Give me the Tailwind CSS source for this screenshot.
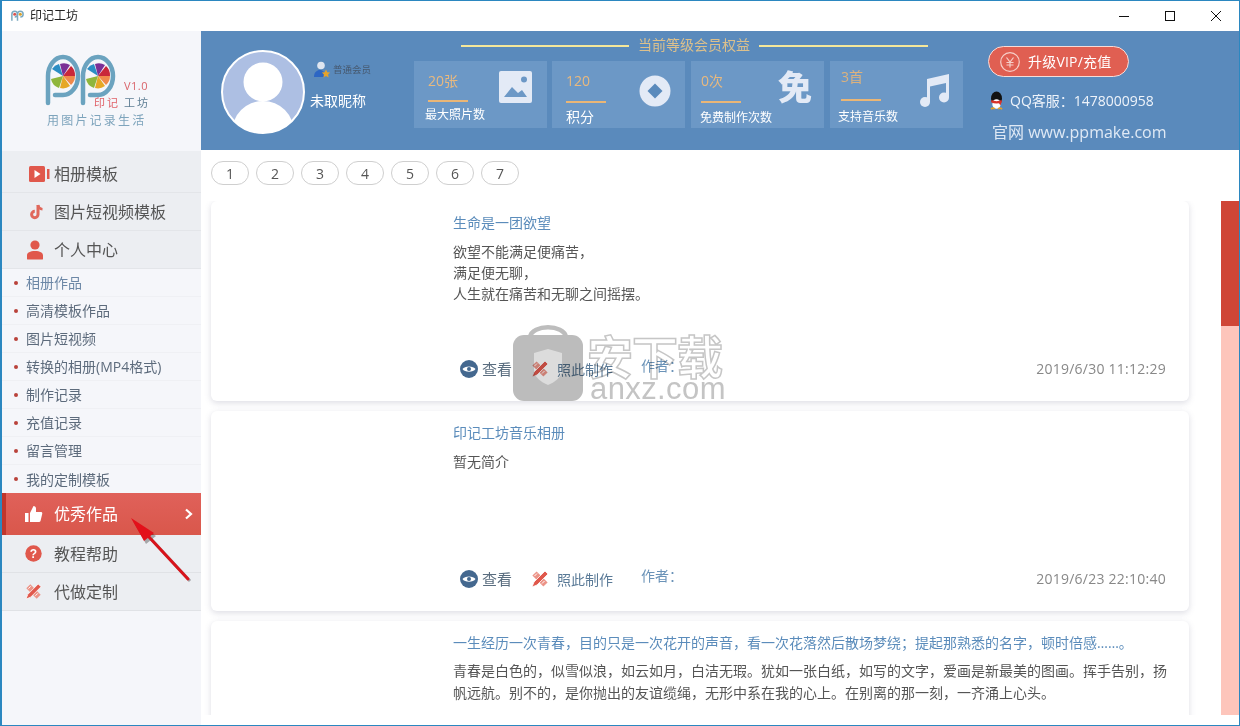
<!DOCTYPE html>
<html lang="zh-CN">

<head>
    <meta charset="UTF-8">
    <title>印记工坊</title>
    <script src="https://cdn.jsdelivr.net/npm/@tailwindcss/browser@4"></script>
</head>

<body class="bg-white">
    <div class="relative w-[1240px] h-[726px] flex flex-col overflow-hidden border border-[#2b87c0] border-l-2 bg-white font-['Open_Sans','Noto_Sans_CJK_SC',sans-serif] text-[14px]">

        <!-- title bar -->
        <div class="h-[30px] shrink-0 flex items-center bg-white">
            <svg class="ml-[8px] w-[15px] h-[16px]" viewBox="0 0 16 16" fill="none">
                <path d="M2 13V6a3 3 0 1 1 3 3" stroke="#7aa9c0" stroke-width="1.6" />
                <path d="M8 13V6a3 3 0 1 1 3 3" stroke="#7aa9c0" stroke-width="1.6" />
                <circle cx="5" cy="6" r="1.6" fill="#d9534f" />
                <circle cx="11" cy="6" r="1.6" fill="#d9a02b" />
            </svg>
            <span class="ml-[5px] text-[#222] text-[12px]">印记工坊</span>
            <div class="ml-auto flex items-center">
                <svg class="w-[46px] h-[30px]" viewBox="0 0 46 30"><path d="M18 15.500h10" stroke="#111" stroke-width="1" /></svg>
                <svg class="w-[46px] h-[30px]" viewBox="0 0 46 30"><rect x="18.500" y="10.500" width="9" height="9" fill="none" stroke="#111" stroke-width="1" /></svg>
                <svg class="w-[46px] h-[30px]" viewBox="0 0 46 30"><path d="M18 10l10 10M28 10L18 20" stroke="#111" stroke-width="1" /></svg>
            </div>
        </div>

        <div class="flex flex-1 min-h-0">
            <!-- sidebar -->
            <aside class="w-[199px] shrink-0 bg-[#f5f6fa] flex flex-col">
                <div class="h-[120px] shrink-0 relative">
                    <svg class="absolute left-[42px] top-[23px] w-[78px] h-[56px]" viewBox="0 0 78 56" fill="none">
                        <path d="M4 49V22a15 19 0 1 1 15 19h-8" stroke="#6ba3bf" stroke-width="4.500" stroke-linecap="round" />
                        <path d="M39 49V22a15 19 0 1 1 15 19h-8" stroke="#6ba3bf" stroke-width="4.500" stroke-linecap="round" />
                        <g transform="translate(-5 0)">
                            <path d="M24 22L13 15a12 12 0 0 1 7-5z" fill="#2b8ec4" />
                            <path d="M24 22l-3-12a12 12 0 0 1 10 1z" fill="#7b2f96" />
                            <path d="M24 22l8-10a12 12 0 0 1 4 10z" fill="#c9283a" />
                            <path d="M24 22h12a12 12 0 0 1-4 9z" fill="#f08a4b" />
                            <path d="M24 22l7 10a12 12 0 0 1-10 2z" fill="#e6a826" />
                            <path d="M24 22l-4 12a12 12 0 0 1-8-9z" fill="#8fb63c" />
                        </g>
                        <g transform="translate(-6 0)">
                            <path d="M60 22L49 15a12 12 0 0 1 7-5z" fill="#2b8ec4" />
                            <path d="M60 22l-3-12a12 12 0 0 1 10 1z" fill="#7b2f96" />
                            <path d="M60 22l8-10a12 12 0 0 1 4 10z" fill="#c9283a" />
                            <path d="M60 22h12a12 12 0 0 1-4 9z" fill="#f08a4b" />
                            <path d="M60 22l7 10a12 12 0 0 1-10 2z" fill="#e6a826" />
                            <path d="M60 22l-4 12a12 12 0 0 1-8-9z" fill="#8fb63c" />
                        </g>
                    </svg>
                    <span class="absolute left-[122px] top-[48px] text-[11px] leading-[14px] tracking-[0.5px] text-[#d9646a]">V1.0</span>
                    <span class="absolute left-[92px] top-[65px] text-[11px] leading-[14px] tracking-[2px] text-[#e0636a]">印记<span class="ml-[4px] text-[#5f7f95]">工坊</span></span>
                    <span class="absolute left-[45px] top-[83px] text-[12px] leading-[14px] tracking-[2.2px] text-[#7ea4bc]">用图片记录生活</span>
                </div>

                <a class="h-[42px] pt-[4px] flex items-center bg-[#eceef2] border-b border-[#e3e5e9] text-[16px] text-[#555]">
                    <svg class="ml-[27px] w-[22px] h-[18px]" viewBox="0 0 22 18"><rect y="1" width="16" height="16" rx="1.500" fill="#e0584c" /><path d="M5.500 5l6 4-6 4z" fill="#fff" /><rect x="18" y="4" width="2.500" height="10" fill="#e0584c" /></svg>
                    <span class="ml-[3px]">相册模板</span>
                </a>
                <a class="h-[38px] flex items-center bg-[#eceef2] border-b border-[#e3e5e9] text-[16px] text-[#555]">
                    <svg class="ml-[26px] w-[18px] h-[18px]" viewBox="0 0 18 18" fill="none"><path d="M10 2v9.500a3.200 3.200 0 1 1-3.200-3.200" stroke="#e0685c" stroke-width="3" /><path d="M10 2c.4 2.600 2 4 4.500 4.200" stroke="#e0685c" stroke-width="2.600" /></svg>
                    <span class="ml-[8px]">图片短视频模板</span>
                </a>
                <a class="h-[38px] flex items-center bg-[#eceef2] border-b border-[#e3e5e9] text-[16px] text-[#555]">
                    <svg class="ml-[24px] w-[18px] h-[20px]" viewBox="0 0 18 20"><circle cx="9" cy="5" r="4.600" fill="#e0584c" /><path d="M1 19v-3.500C1 12.500 4 11 9 11s8 1.500 8 4.500V19a1 1 0 0 1-1 .5H2a1 1 0 0 1-1-.5z" fill="#e0584c" /></svg>
                    <span class="ml-[10px]">个人中心</span>
                </a>

                <div class="flex flex-col text-[14px] text-[#5d6b7c]">
                    <a class="h-[28px] flex items-center border-b border-[#eff0f4] text-[#6c87a6]"><i class="ml-[12px] w-[4px] h-[4px] rounded-full bg-[#b9423a]"></i><span class="ml-[8px]">相册作品</span></a>
                    <a class="h-[28px] flex items-center border-b border-[#eff0f4]"><i class="ml-[12px] w-[4px] h-[4px] rounded-full bg-[#b9423a]"></i><span class="ml-[8px]">高清模板作品</span></a>
                    <a class="h-[28px] flex items-center border-b border-[#eff0f4]"><i class="ml-[12px] w-[4px] h-[4px] rounded-full bg-[#b9423a]"></i><span class="ml-[8px]">图片短视频</span></a>
                    <a class="h-[28px] flex items-center border-b border-[#eff0f4]"><i class="ml-[12px] w-[4px] h-[4px] rounded-full bg-[#b9423a]"></i><span class="ml-[8px]">转换的相册(MP4格式)</span></a>
                    <a class="h-[28px] flex items-center border-b border-[#eff0f4]"><i class="ml-[12px] w-[4px] h-[4px] rounded-full bg-[#b9423a]"></i><span class="ml-[8px]">制作记录</span></a>
                    <a class="h-[28px] flex items-center border-b border-[#eff0f4]"><i class="ml-[12px] w-[4px] h-[4px] rounded-full bg-[#b9423a]"></i><span class="ml-[8px]">充值记录</span></a>
                    <a class="h-[28px] flex items-center border-b border-[#eff0f4]"><i class="ml-[12px] w-[4px] h-[4px] rounded-full bg-[#b9423a]"></i><span class="ml-[8px]">留言管理</span></a>
                    <a class="h-[28px] flex items-center"><i class="ml-[12px] w-[4px] h-[4px] rounded-full bg-[#b9423a]"></i><span class="ml-[8px]">我的定制模板</span></a>
                </div>

                <a class="h-[42px] flex items-center bg-gradient-to-b from-[#e0615a] to-[#d9574b] border-l-[4px] border-[#c0362c] text-[16px] text-white">
                    <svg class="ml-[19px] w-[18px] h-[18px]" viewBox="0 0 18 18" fill="#fff"><rect x="0" y="8" width="3.500" height="9" /><path d="M5 8l3.500-7c1.500 0 2.500 1 2.500 2.500V7h5c1 0 1.500 1 1.200 2l-1.700 7c-.2.700-.7 1-1.500 1H5z" /></svg>
                    <span class="ml-[11px]">优秀作品</span>
                    <svg class="ml-auto mr-[8px] w-[9px] h-[12px]" viewBox="0 0 9 12" fill="none"><path d="M2 1.500L7 6l-5 4.500" stroke="#fff" stroke-width="2.200" /></svg>
                </a>
                <a class="h-[38px] flex items-center bg-[#eceef2] border-b border-[#e0e2e6] text-[16px] text-[#555]">
                    <svg class="ml-[23px] w-[17px] h-[17px]" viewBox="0 0 17 17"><circle cx="8.500" cy="8.500" r="8.200" fill="#e0584c" /><text x="8.500" y="12.800" text-anchor="middle" font-size="12" font-weight="700" fill="#fff" font-family="Liberation Sans">?</text></svg>
                    <span class="ml-[12px]">教程帮助</span>
                </a>
                <a class="h-[38px] flex items-center bg-[#eceef2] border-b border-[#e0e2e6] text-[16px] text-[#555]">
                    <svg class="ml-[23px] w-[17px] h-[17px]" viewBox="0 0 18 18" fill="none"><path d="M3.500 3.500l11 11" stroke="#ec9488" stroke-width="6" /><path d="M3.500 6L6 3.500M7 9.500L9.500 7M11 13.500l2.500-2.500" stroke="#fff" stroke-width="1" /><path d="M14 1L17 4 6 15 1 17l2-5z" fill="#e0584c" stroke="#fff" stroke-width="0.800" /></svg>
                    <span class="ml-[12px]">代做定制</span>
                </a>
            </aside>

            <div class="flex-1 min-w-0 flex flex-col">
                <!-- member header -->
                <header class="h-[119px] shrink-0 bg-[#5a8abc] flex">
                    <svg class="ml-[20px] mt-[19px] w-[84px] h-[84px] shrink-0" viewBox="0 0 84 84">
                        <clipPath id="avatarClip"><circle cx="42" cy="42" r="41" /></clipPath>
                        <circle cx="42" cy="42" r="41" fill="#adbfe3" />
                        <g clip-path="url(#avatarClip)" fill="#fff">
                            <circle cx="42" cy="32" r="19.500" />
                            <ellipse cx="42" cy="82" rx="31" ry="31" />
                        </g>
                        <circle cx="42" cy="42" r="41" fill="none" stroke="#fff" stroke-width="2" />
                    </svg>
                    <div class="w-[104px] shrink-0 ml-[5px] pt-[29px]">
                        <div class="flex items-center h-[20px] ml-[3px]">
                            <svg class="w-[18px] h-[18px] shrink-0" viewBox="0 0 18 18"><circle cx="8" cy="4.500" r="3.800" fill="#dfe6f0" /><path d="M1 16c0-5 3-7 6-7s5 2 5 7z" fill="#2c66c4" /><path d="M13 8.500l1.300 2.700 2.900.4-2.100 2 .5 2.900-2.600-1.400-2.600 1.400.5-2.900-2.100-2 2.900-.4z" fill="#e5a32b" /></svg>
                            <span class="ml-[2px] text-[9.500px] text-[#46586e]">普通会员</span>
                        </div>
                        <div class="mt-[11px] text-white leading-[20px]">未取昵称</div>
                    </div>

                    <div class="w-[553px] shrink-0 flex flex-col">
                        <div class="h-[30px] flex items-center">
                            <i class="ml-[47px] w-[168px] h-[2px] bg-[#f5e79a]"></i>
                            <span class="mx-[9px] text-[#dcc08c] text-[14px] leading-[24px] -translate-y-[1px]">当前等级会员权益</span>
                            <i class="w-[169px] h-[2px] bg-[#f5e79a]"></i>
                        </div>
                        <div class="flex gap-[5px] text-white">
                            <div class="relative w-[133px] h-[67px] bg-[#6c98c6] pl-[14px] pt-[9px]">
                                <div class="text-[14px] leading-[22px] text-[#e8b97f]">20张</div>
                                <i class="block mt-[8px] w-[40px] h-[2px] bg-[#eab676]"></i>
                                <div class="mt-[5px] -ml-[3px] text-[12px] leading-[15px]">最大照片数</div>
                                <svg class="absolute left-[85px] top-[10px] w-[33px] h-[32px]" viewBox="0 0 33 32"><rect width="33" height="32" rx="2" fill="#e3eaf6" /><path d="M5 26l8-10 6 6 4-3 5 7z" fill="#6c98c6" /><circle cx="25" cy="8.500" r="3" fill="#6c98c6" /></svg>
                            </div>
                            <div class="relative w-[133px] h-[67px] bg-[#6c98c6] pl-[14px] pt-[9px]">
                                <div class="text-[14px] leading-[22px] text-[#e8b97f]">120</div>
                                <i class="block mt-[9px] w-[40px] h-[2px] bg-[#eab676]"></i>
                                <div class="mt-[6px] text-[14px] leading-[15px]">积分</div>
                                <svg class="absolute left-[87px] top-[14px] w-[32px] h-[32px]" viewBox="0 0 32 32"><circle cx="16" cy="16" r="15.500" fill="#e3eaf6" /><path d="M16 8.500l7.500 7.500-7.500 7.500L8.500 16z" fill="#5a8abc" /></svg>
                            </div>
                            <div class="relative w-[133px] h-[67px] bg-[#6c98c6] ml-[1px] pl-[10px] pt-[9px]">
                                <div class="text-[14px] leading-[22px] text-[#e8b97f]">0次</div>
                                <i class="block mt-[9px] w-[40px] h-[2px] bg-[#eab676]"></i>
                                <div class="mt-[7px] -ml-[1px] text-[12px] leading-[15px]">免费制作次数</div>
                                <span class="absolute left-[87px] top-[7px] text-[34px] leading-[38px] font-black text-[#e3eaf6]">免</span>
                            </div>
                            <div class="relative w-[133px] h-[67px] bg-[#6c98c6] ml-[1px] pl-[11px] pt-[5px]">
                                <div class="text-[14px] leading-[22px] text-[#dcb27e]">3首</div>
                                <i class="block mt-[11px] w-[40px] h-[2px] bg-[#eab676]"></i>
                                <div class="mt-[8px] -ml-[3px] text-[12px] leading-[15px]">支持音乐数</div>
                                <svg class="absolute left-[89px] top-[11px] w-[32px] h-[36px]" viewBox="0 0 32 36" fill="#e3eaf6"><ellipse cx="6" cy="30" rx="5" ry="5" /><ellipse cx="25" cy="25.500" rx="5" ry="5" /><path d="M8 30V7L30 2v23.500h-3V11L11 14.500V30z" /></svg>
                            </div>
                        </div>
                    </div>

                    <div class="ml-[21px] flex flex-col">
                        <div class="mt-[15px] w-[141px] h-[31px] rounded-full bg-[#e05f52] border border-[#f6dcd8] flex items-center">
                            <svg class="ml-[11px] w-[20px] h-[20px]" viewBox="0 0 20 20" fill="none" stroke="#f6cfc9" stroke-width="1.200"><circle cx="10" cy="10" r="9.300" /><path d="M6.500 5.500L10 10l3.500-4.500M10 10v5.500M6.500 10.500h7M6.500 13h7" /></svg>
                            <span class="ml-[8px] text-[14px] tracking-[0.2px] text-white">升级VIP/充值</span>
                        </div>
                        <div class="mt-[13px] flex items-center h-[20px]">
                            <svg class="ml-[1px] w-[15px] h-[19px]" viewBox="0 0 15 19"><ellipse cx="7.500" cy="7.500" rx="5.500" ry="7" fill="#111" /><ellipse cx="7.500" cy="13" rx="4.200" ry="4.800" fill="#fff" /><path d="M2.500 9c3 1.500 7 1.500 10 0l.5 2.200c-3.500 1.600-7.500 1.600-11 0z" fill="#d8332a" /><path d="M9.500 11.500l2 3 1-3.500z" fill="#d8332a" /><path d="M2 18.200c1-1.200 2.800-1.200 4-.4M13 18.200c-1-1.200-2.800-1.200-4-.4" stroke="#e5a32b" stroke-width="1.500" fill="none" /></svg>
                            <span class="ml-[6px] text-[14px] text-[#eef3fa]">QQ客服：1478000958</span>
                        </div>
                        <div class="mt-[11px] ml-[4px] text-[16px] leading-[22px] text-[#dfe9f5]">官网 www.ppmake.com</div>
                    </div>
                </header>

                <!-- pagination -->
                <div class="h-[51px] shrink-0 flex items-start gap-[7px] pl-[10px] pt-[11px] text-[#555]">
                    <a class="w-[38px] h-[24px] rounded-full border border-[#cfcfcf] flex items-center justify-center">1</a>
                    <a class="w-[38px] h-[24px] rounded-full border border-[#cfcfcf] flex items-center justify-center">2</a>
                    <a class="w-[38px] h-[24px] rounded-full border border-[#cfcfcf] flex items-center justify-center">3</a>
                    <a class="w-[38px] h-[24px] rounded-full border border-[#cfcfcf] flex items-center justify-center">4</a>
                    <a class="w-[38px] h-[24px] rounded-full border border-[#cfcfcf] flex items-center justify-center">5</a>
                    <a class="w-[38px] h-[24px] rounded-full border border-[#cfcfcf] flex items-center justify-center">6</a>
                    <a class="w-[38px] h-[24px] rounded-full border border-[#cfcfcf] flex items-center justify-center">7</a>
                </div>

                <!-- works list -->
                <div class="h-[514px] shrink-0 flex overflow-hidden">
                    <div class="w-[1020px] shrink-0 pl-[10px] pr-[32px] flex flex-col gap-[10px]">
                        <article class="relative h-[200px] shrink-0 rounded-[6px] bg-white shadow-[0_2px_6px_rgba(100,100,130,0.22)] pl-[242px] pt-[11px] flex flex-col">
                            <h3 class="text-[#5b8cbb] text-[14px] leading-[21px]">生命是一团欲望</h3>
                            <p class="mt-[8px] text-[#555] text-[14px] leading-[21px]">欲望不能满足便痛苦，<br>满足便无聊，<br>人生就在痛苦和无聊之间摇摆。</p>
                            <div class="absolute left-[249px] right-[23px] top-[155px] flex items-center h-[26px]">
                                <svg class="w-[18px] h-[18px]" viewBox="0 0 18 18"><circle cx="9" cy="9" r="9" fill="#44688f" /><path d="M2.500 9C4.500 5.500 13.500 5.500 15.500 9 13.500 12.500 4.500 12.500 2.500 9z" fill="#fff" /><circle cx="9" cy="9" r="2" fill="#44688f" /></svg>
                                <span class="ml-[4px] text-[15px] text-[#5a6d7f]">查看</span>
                                <svg class="ml-[19px] w-[18px] h-[18px]" viewBox="0 0 18 18" fill="none"><path d="M3.500 3.500l11 11" stroke="#ec9488" stroke-width="6" /><path d="M3.500 6L6 3.500M7 9.500L9.500 7M11 13.500l2.500-2.500" stroke="#fff" stroke-width="1" /><path d="M14 1L17 4 6 15 1 17l2-5z" fill="#e0584c" stroke="#fff" stroke-width="0.800" /></svg>
                                <span class="ml-[8px] text-[14px] text-[#5a7a97]">照此制作</span>
                                <span class="ml-[28px] -translate-y-[4px] text-[14px] text-[#6b93b8]">作者：</span>
                                <span class="ml-auto -translate-y-[1px] text-[14px] tracking-[0.25px] text-[#888]">2019/6/30 11:12:29</span>
                            </div>
                        </article>

                        <article class="relative h-[200px] shrink-0 rounded-[6px] bg-white shadow-[0_2px_6px_rgba(100,100,130,0.22)] pl-[242px] pt-[11px] flex flex-col">
                            <h3 class="text-[#5b8cbb] text-[14px] leading-[21px]">印记工坊音乐相册</h3>
                            <p class="mt-[8px] text-[#555] text-[14px] leading-[21px]">暂无简介</p>
                            <div class="absolute left-[249px] right-[23px] top-[155px] flex items-center h-[26px]">
                                <svg class="w-[18px] h-[18px]" viewBox="0 0 18 18"><circle cx="9" cy="9" r="9" fill="#44688f" /><path d="M2.500 9C4.500 5.500 13.500 5.500 15.500 9 13.500 12.500 4.500 12.500 2.500 9z" fill="#fff" /><circle cx="9" cy="9" r="2" fill="#44688f" /></svg>
                                <span class="ml-[4px] text-[15px] text-[#5a6d7f]">查看</span>
                                <svg class="ml-[19px] w-[18px] h-[18px]" viewBox="0 0 18 18" fill="none"><path d="M3.500 3.500l11 11" stroke="#ec9488" stroke-width="6" /><path d="M3.500 6L6 3.500M7 9.500L9.500 7M11 13.500l2.500-2.500" stroke="#fff" stroke-width="1" /><path d="M14 1L17 4 6 15 1 17l2-5z" fill="#e0584c" stroke="#fff" stroke-width="0.800" /></svg>
                                <span class="ml-[8px] text-[14px] text-[#5a7a97]">照此制作</span>
                                <span class="ml-[28px] -translate-y-[4px] text-[14px] text-[#6b93b8]">作者：</span>
                                <span class="ml-auto -translate-y-[1px] text-[14px] tracking-[0.25px] text-[#888]">2019/6/23 22:10:40</span>
                            </div>
                        </article>

                        <article class="relative h-[200px] shrink-0 rounded-[6px] bg-white shadow-[0_2px_6px_rgba(100,100,130,0.22)] pl-[242px] pr-[22px] pt-[11px] flex flex-col">
                            <h3 class="text-[#5b8cbb] text-[14px] leading-[21px] whitespace-nowrap">一生经历一次青春，目的只是一次花开的声音，看一次花落然后散场梦绕；提起那熟悉的名字，顿时倍感……。</h3>
                            <p class="mt-[7px] text-[#555] text-[14px] leading-[22px]">青春是白色的，似雪似浪，如云如月，白洁无瑕。犹如一张白纸，如写的文字，爱画是新最美的图画。挥手告别，扬帆远航。别不的，是你抛出的友谊缆绳，无形中系在我的心上。在别离的那一刻，一齐涌上心头。</p>
                        </article>
                    </div>
                    <div class="w-[18px] shrink-0 bg-[#fdc5bb]">
                        <div class="h-[125px] bg-[#cf4636]"></div>
                    </div>
                </div>
            </div>
        </div>

        <!-- watermark -->
        <div class="absolute left-[510px] top-[320px] w-[220px] h-[84px] pointer-events-none mix-blend-multiply">
            <svg class="absolute left-[0px] top-[0px] w-[72px] h-[81px]" viewBox="0 0 72 81">
                <path d="M18 16C20 3 52 3 54 16" fill="none" stroke="#bdbdbd" stroke-width="4.500" />
                <rect x="1" y="14" width="70" height="66" rx="11" fill="#bcbcbc" />
                <path d="M22 32l14-4 14 4v17c0 7-7 12-14 15-7-3-14-8-14-15z" fill="#dcdcdc" />
            </svg>
            <span class="absolute left-[75px] top-[8px] text-[46px] leading-[54px] font-bold tracking-[-1px] text-white [-webkit-text-stroke:1.5px_#c6c6c6]">安下载</span>
            <span class="absolute left-[78px] top-[53px] text-[31px] leading-[30px] font-['Liberation_Sans'] tracking-[0.4px] text-[#c4c4c4]">anxz.com</span>
        </div>

        <!-- red annotation arrow -->
        <svg class="absolute left-[120px] top-[510px] w-[75px] h-[75px] pointer-events-none" viewBox="0 0 75 75">
            <path d="M66 68L27 26" stroke="#000" stroke-opacity="0.3" stroke-width="3" transform="translate(2 2)" />
            <path d="M9 7l13 23 10-8z" fill="#000" fill-opacity="0.3" transform="translate(2 3)" />
            <path d="M66 68L27 26" stroke="#d8131b" stroke-width="3" stroke-linecap="round" />
            <path d="M9 7l13 23 10-8z" fill="#e3101a" />
        </svg>
    </div>
</body>

</html>
